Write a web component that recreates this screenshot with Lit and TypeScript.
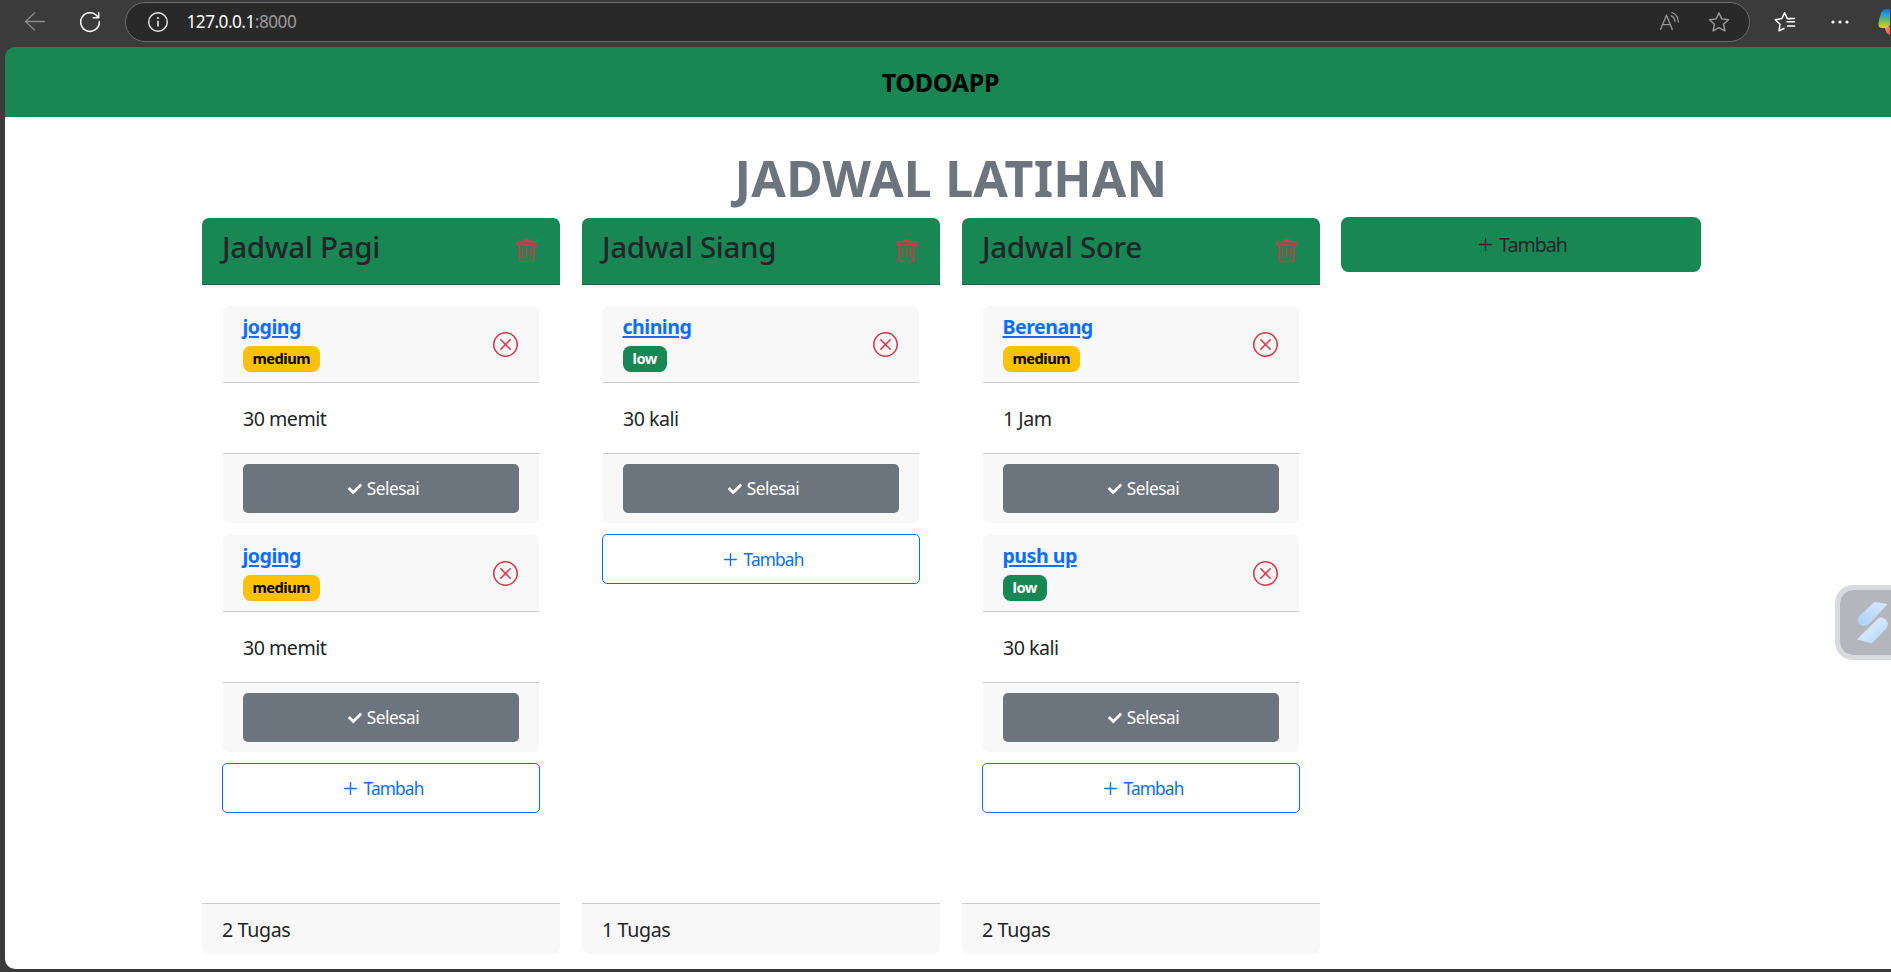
import { LitElement, html, css, svg } from "lit";
import { customElement, property } from "lit/decorators.js";

type Level = "low" | "medium";
interface Task { name: string; level: Level; note: string; }
interface Schedule { title: string; tasks: Task[]; }

const schedules: Schedule[] = [
  { title: "Jadwal Pagi", tasks: [
    { name: "joging", level: "medium", note: "30 memit" },
    { name: "joging", level: "medium", note: "30 memit" },
  ] },
  { title: "Jadwal Siang", tasks: [{ name: "chining", level: "low", note: "30 kali" }] },
  { title: "Jadwal Sore", tasks: [
    { name: "Berenang", level: "medium", note: "1 Jam" },
    { name: "push up", level: "low", note: "30 kali" },
  ] },
];

const plusIcon = html`<svg class="plus" width="13" height="13" viewBox="0 0 13 13">${svg`<path d="M6.5 .6V12.4M.6 6.5H12.4" fill="none" stroke="currentColor" stroke-width="1.35" stroke-linecap="round"/>`}</svg>`;

@customElement("browser-bar")
class BrowserBar extends LitElement {
  static styles = css`
    :host { display: flex; align-items: flex-start; height: 47px; color: #fff; }
    svg { display: block; flex: none; }
    .back { margin: 11px 0 0 24px; }
    .reload { margin: 11px 0 0 34px; }
    .address {
      box-sizing: border-box; display: flex; align-items: center; flex: none;
      width: 1625px; height: 40px; margin: 2px 0 0 24px; padding: 0 19px 0 21px;
      border: 1px solid #6d6d6d; border-radius: 20px; background: #292929;
    }
    .url { margin-left: 17.5px; flex: 1; font-size: 17.2px; line-height: 24px; letter-spacing: -0.5px; }
    .port { color: #9a9a9a; }
    .read { margin-right: 28px; }
    .favorites { margin: 11px 0 0 24px; }
    .more { margin: 20px 0 0 35px; }
    .copilot { margin: 9px 0 0 29px; }
  `;
  render() {
    return html`
      <svg class="back" width="22" height="22" viewBox="0 0 22 22" fill="none" stroke="#8a8a8a" stroke-width="1.3" stroke-linecap="round" stroke-linejoin="round"><path d="M20.5 10.5H1.5M10.5 2 1.5 10.5 10.5 19"/></svg>
      <svg class="reload" width="21" height="22" viewBox="0 0 21 22" fill="none" stroke="#fff" stroke-width="1.5" stroke-linecap="round" stroke-linejoin="round"><path d="M19.3 10.8A9.3 9.3 0 1 1 17.3 5.3L18.4 6.7M18.7 1.8V6.8H13.3"/></svg>
      <div class="address">
        <svg width="22" height="22" viewBox="0 0 22 22"><circle cx="11" cy="11" r="9.3" fill="none" stroke="#e6e6e6" stroke-width="1.4"/><circle cx="11" cy="7" r="1.1" fill="#e6e6e6"/><path d="M11 9.8V15.6" stroke="#e6e6e6" stroke-width="1.6"/></svg>
        <span class="url">127.0.0.1<span class="port">:8000</span></span>
        <svg class="read" width="21" height="22" viewBox="0 0 21 22" fill="none" stroke="#999" stroke-width="1.3" stroke-linecap="round" stroke-linejoin="round"><path d="M1.5 18.5 7.5 4.2 13.3 18.5M3.5 13.6H11.4M12.200 4.800Q15.600 6.200 15.900 10.200M13 1.500Q19 3.700 19.300 10.900"/></svg>
        <svg width="22" height="22" viewBox="0 0 22 22" fill="none" stroke="#999" stroke-width="1.4" stroke-linejoin="round"><path d="M11 1.8 13.8 7.9 20.5 8.7 15.5 13.2 16.9 20 11 16.7 5.1 20 6.5 13.2 1.5 8.7 8.2 7.9Z"/></svg>
      </div>
      <svg class="favorites" width="22" height="22" viewBox="0 0 22 22" fill="none" stroke="#fff" stroke-width="1.5" stroke-linecap="round" stroke-linejoin="round"><path d="M16 8 13.4 7.6 10.6 1.8 7.8 7.6 1.3 8.7 6 13.2 5 19.8 10 17.5M13 10.8H20.6M13.5 15H20.6M15 7.4H20.6" /></svg>
      <svg class="more" width="18" height="4" viewBox="0 0 18 4" fill="#fff"><circle cx="2" cy="2" r="1.6"/><circle cx="9" cy="2" r="1.6"/><circle cx="16" cy="2" r="1.6"/></svg>
      <svg class="copilot" width="12" height="26" viewBox="0 0 12 26">
        <defs>
          <linearGradient id="body" x1="0" y1="0" x2="0" y2="1"><stop offset="0" stop-color="#1766c8"/><stop offset=".25" stop-color="#1b9ee6"/><stop offset=".6" stop-color="#68b860"/><stop offset="1" stop-color="#f4cd12"/></linearGradient>
          <linearGradient id="tail" x1="0" y1="0" x2="1" y2="1"><stop offset="0" stop-color="#f59a4a"/><stop offset="1" stop-color="#ee4f66"/></linearGradient>
        </defs>
        <path d="M6 18H12V26Q8.500 25 7.600 21.500Q7.200 19.300 6 18Z" fill="url(#tail)"/>
        <path d="M7.500 0H12V16Q10.500 19 7 19H4Q0 19 .4 14.500Q1.200 8 3.500 3Q4.800 0 7.500 0Z" fill="url(#body)"/>
      </svg>`;
  }
}

@customElement("task-card")
class TaskCard extends LitElement {
  @property({ attribute: false }) task!: Task;
  static styles = css`
    :host { display: block; border: 1px solid #fff; border-radius: 7px; overflow: hidden; color: #212529; }
    .head { display: flex; align-items: center; justify-content: space-between; box-sizing: border-box; height: 77px; padding: 9px 20px 10px; background: #f8f8f8; border-bottom: 1px solid #c9cacb; }
    .info { display: flex; flex-direction: column; align-items: flex-start; gap: 8px; }
    .name { margin-left: -0.5px; color: #0d6efd; font-weight: 700; font-size: 19.6px; line-height: 23px; letter-spacing: -0.52px; text-decoration: underline; text-decoration-thickness: 2px; text-underline-offset: 2px; }
    .badge { height: 26px; box-sizing: border-box; padding: 0 10px 0 9.500px; border-radius: 7.500px; font-weight: 700; font-size: 14.7px; line-height: 25px; letter-spacing: -0.5px; }
    .medium { background: #ffc107; color: #000; }
    .low { background: #198754; color: #fff; }
    .close { display: block; margin: 2px 1px 0 0; }
    .note { box-sizing: border-box; height: 70px; padding: 21px 20px 19px; font-size: 19.6px; line-height: 30px; letter-spacing: -0.5px; }
    .foot { padding: 10px 20px; background: #f8f8f8; border-top: 1px solid #c9cacb; }
    .done { display: flex; align-items: center; justify-content: center; gap: 5px; width: 100%; height: 49px; padding: 0 0 0 5px; border: 0; border-radius: 5px; background: #6c757d; color: #fff; font: 17.3px/26px "Noto Sans", "Open Sans", sans-serif; letter-spacing: -0.5px; }
  `;
  render() {
    const { name, level, note } = this.task;
    return html`
      <div class="head">
        <div class="info"><a class="name">${name}</a><span class="badge ${level}">${level}</span></div>
        <svg class="close" width="25" height="25" viewBox="0 0 16 16" fill="#dc3545"><path d="M8 15A7 7 0 1 1 8 1a7 7 0 0 1 0 14m0 1A8 8 0 1 0 8 0a8 8 0 0 0 0 16"/><path d="M4.646 4.646a.5.5 0 0 1 .708 0L8 7.293l2.646-2.647a.5.5 0 0 1 .708.708L8.707 8l2.647 2.646a.5.5 0 0 1-.708.708L8 8.707l-2.646 2.647a.5.5 0 0 1-.708-.708L7.293 8 4.646 5.354a.5.5 0 0 1 0-.708"/></svg>
      </div>
      <div class="note">${note}</div>
      <div class="foot"><button class="done">
        <svg width="14" height="14" viewBox="0 0 512 512" fill="#fff"><path d="M173.898 439.404l-166.4-166.4c-9.997-9.997-9.997-26.206 0-36.204l36.203-36.204c9.997-9.998 26.207-9.998 36.204 0L192 312.69 432.095 72.596c9.997-9.997 26.207-9.997 36.204 0l36.203 36.204c9.997 9.997 9.997 26.206 0 36.204l-294.4 294.401c-9.998 9.997-26.207 9.997-36.204-.001z"/></svg>
        <span>Selesai</span></button></div>`;
  }
}

@customElement("schedule-column")
class ScheduleColumn extends LitElement {
  @property({ attribute: false }) schedule!: Schedule;
  static styles = css`
    :host { display: flex; flex-direction: column; box-sizing: border-box; width: 360px; height: 738px; border: 1px solid #fff; border-radius: 7.500px; overflow: hidden; color: #212529; }
    .head { display: flex; justify-content: space-between; align-items: flex-start; box-sizing: border-box; height: 67px; padding: 10px 22px 10px 20px; background: #198754; border-bottom: 1px solid #146c43; border-radius: 6px 6px 0 0; }
    .title { margin: 0; font-weight: 500; font-size: 29.5px; line-height: 37px; letter-spacing: -0.3px; }
    .trash { display: block; margin-top: 11px; }
    .body { flex: 1; padding: 20px; display: flex; flex-direction: column; gap: 10px; }
    .add { display: flex; align-items: center; justify-content: center; gap: 7px; height: 50px; flex: none; box-sizing: border-box; padding: 1px 0 0 5px; border: 1px solid #0d6efd; border-radius: 5px; background: #fff; color: #0d6efd; font: 17.3px/26px "Noto Sans", "Open Sans", sans-serif; letter-spacing: -0.85px; }
    .foot { box-sizing: border-box; height: 51px; padding: 11px 20px 9px; border-top: 1px solid #c9cacb; background: #f8f8f8; border-radius: 0 0 6px 6px; font-size: 19.6px; line-height: 30px; letter-spacing: -0.35px; }
  `;
  render() {
    const { title, tasks } = this.schedule;
    return html`
      <div class="head"><h2 class="title">${title}</h2>
        <svg class="trash" width="22" height="24" viewBox="0 0 22 24" fill="none" stroke="#dc3545" stroke-width="1.400" stroke-linecap="round"><rect x="1" y="2.700" width="19.300" height="3.200" rx="1.300"/><path d="M8.200 1.200H13" stroke-width="2"/><path d="M3.300 6.200V19.700Q3.300 22.500 6 22.500H15.300Q18 22.500 18 19.700V6.200"/><path d="M6.400 9.200V18.300M10.650 9.200V18.300M14.900 9.200V18.300" stroke-width="1.300"/></svg>
      </div>
      <div class="body">
        ${tasks.map((t) => html`<task-card .task=${t}></task-card>`)}
        <button class="add">${plusIcon}<span>Tambah</span></button>
      </div>
      <div class="foot">${tasks.length} Tugas</div>`;
  }
}

@customElement("app-root")
class AppRoot extends LitElement {
  static styles = css`
    :host { display: block; position: relative; width: 100%; height: 972px; overflow: hidden; background: #3b3b3b; font-family: "Noto Sans", "Open Sans", sans-serif; }
    .page { width: 1892px; height: 922px; margin-left: 5px; background: linear-gradient(#198754 70px, #fff 70px); border-radius: 10px 0 0 10px; overflow: hidden; }
    .nav { display: flex; justify-content: center; align-items: center; height: 70px; box-sizing: border-box; padding-right: 21px; color: #000; font-weight: 700; font-size: 25px; letter-spacing: -0.3px; }
    .heading { margin: 0; padding-top: 31px; height: 69px; text-align: center; color: #6c757d; font-weight: 700; font-size: 50px; line-height: 61px; letter-spacing: 0.2px; }
    .board { display: flex; align-items: flex-start; gap: 20px; padding-left: 196px; }
    .new { display: flex; align-items: center; justify-content: center; gap: 7px; box-sizing: border-box; width: 360px; height: 55px; padding: 0 0 0 4px; border: 0; border-radius: 7.500px; background: #198754; color: #212529; font: 19.6px/30px "Noto Sans", "Open Sans", sans-serif; letter-spacing: -1px; }
    .widget { position: absolute; left: 1835px; top: 585px; box-sizing: border-box; width: 75px; height: 75px; border: 5px solid #d9dadf; border-radius: 18px; background: #b5b6bd; background-clip: padding-box; }
    .widget svg { display: block; margin: 12px 0 0 16px; }
  `;
  render() {
    return html`
      <browser-bar></browser-bar>
      <main class="page">
        <nav class="nav">TODOAPP</nav>
        <h1 class="heading">JADWAL LATIHAN</h1>
        <div class="board">
          ${schedules.map((s) => html`<schedule-column .schedule=${s}></schedule-column>`)}
          <button class="new">${plusIcon}<span>Tambah</span></button>
        </div>
      </main>
      <div class="widget">
        <svg width="33" height="42" viewBox="0 0 33 42">
          <defs>
            <linearGradient id="up" x1="1" y1="0" x2="0" y2="1"><stop offset="0" stop-color="#d9eafb"/><stop offset="1" stop-color="#a9d0fb"/></linearGradient>
            <linearGradient id="down" x1="0" y1="0" x2="1" y2="1"><stop offset="0" stop-color="#e6f2ff"/><stop offset=".5" stop-color="#cfe5fc"/><stop offset="1" stop-color="#a9d0fb"/></linearGradient>
          </defs>
          <path d="M18.300 0 31.700 2 13.500 21.500Q10.500 24.300 6.500 24 2.500 22.500 2 18.500 2 15.500 4 13.500Z" fill="url(#up)"/>
          <path d="M22 16.500Q24.500 14.500 27.500 16.300 31.500 18 32 21.500 32.200 24.300 30 26.800L15.800 41.500 1 37.500Z" fill="url(#down)"/>
        </svg>
      </div>`;
  }
}
